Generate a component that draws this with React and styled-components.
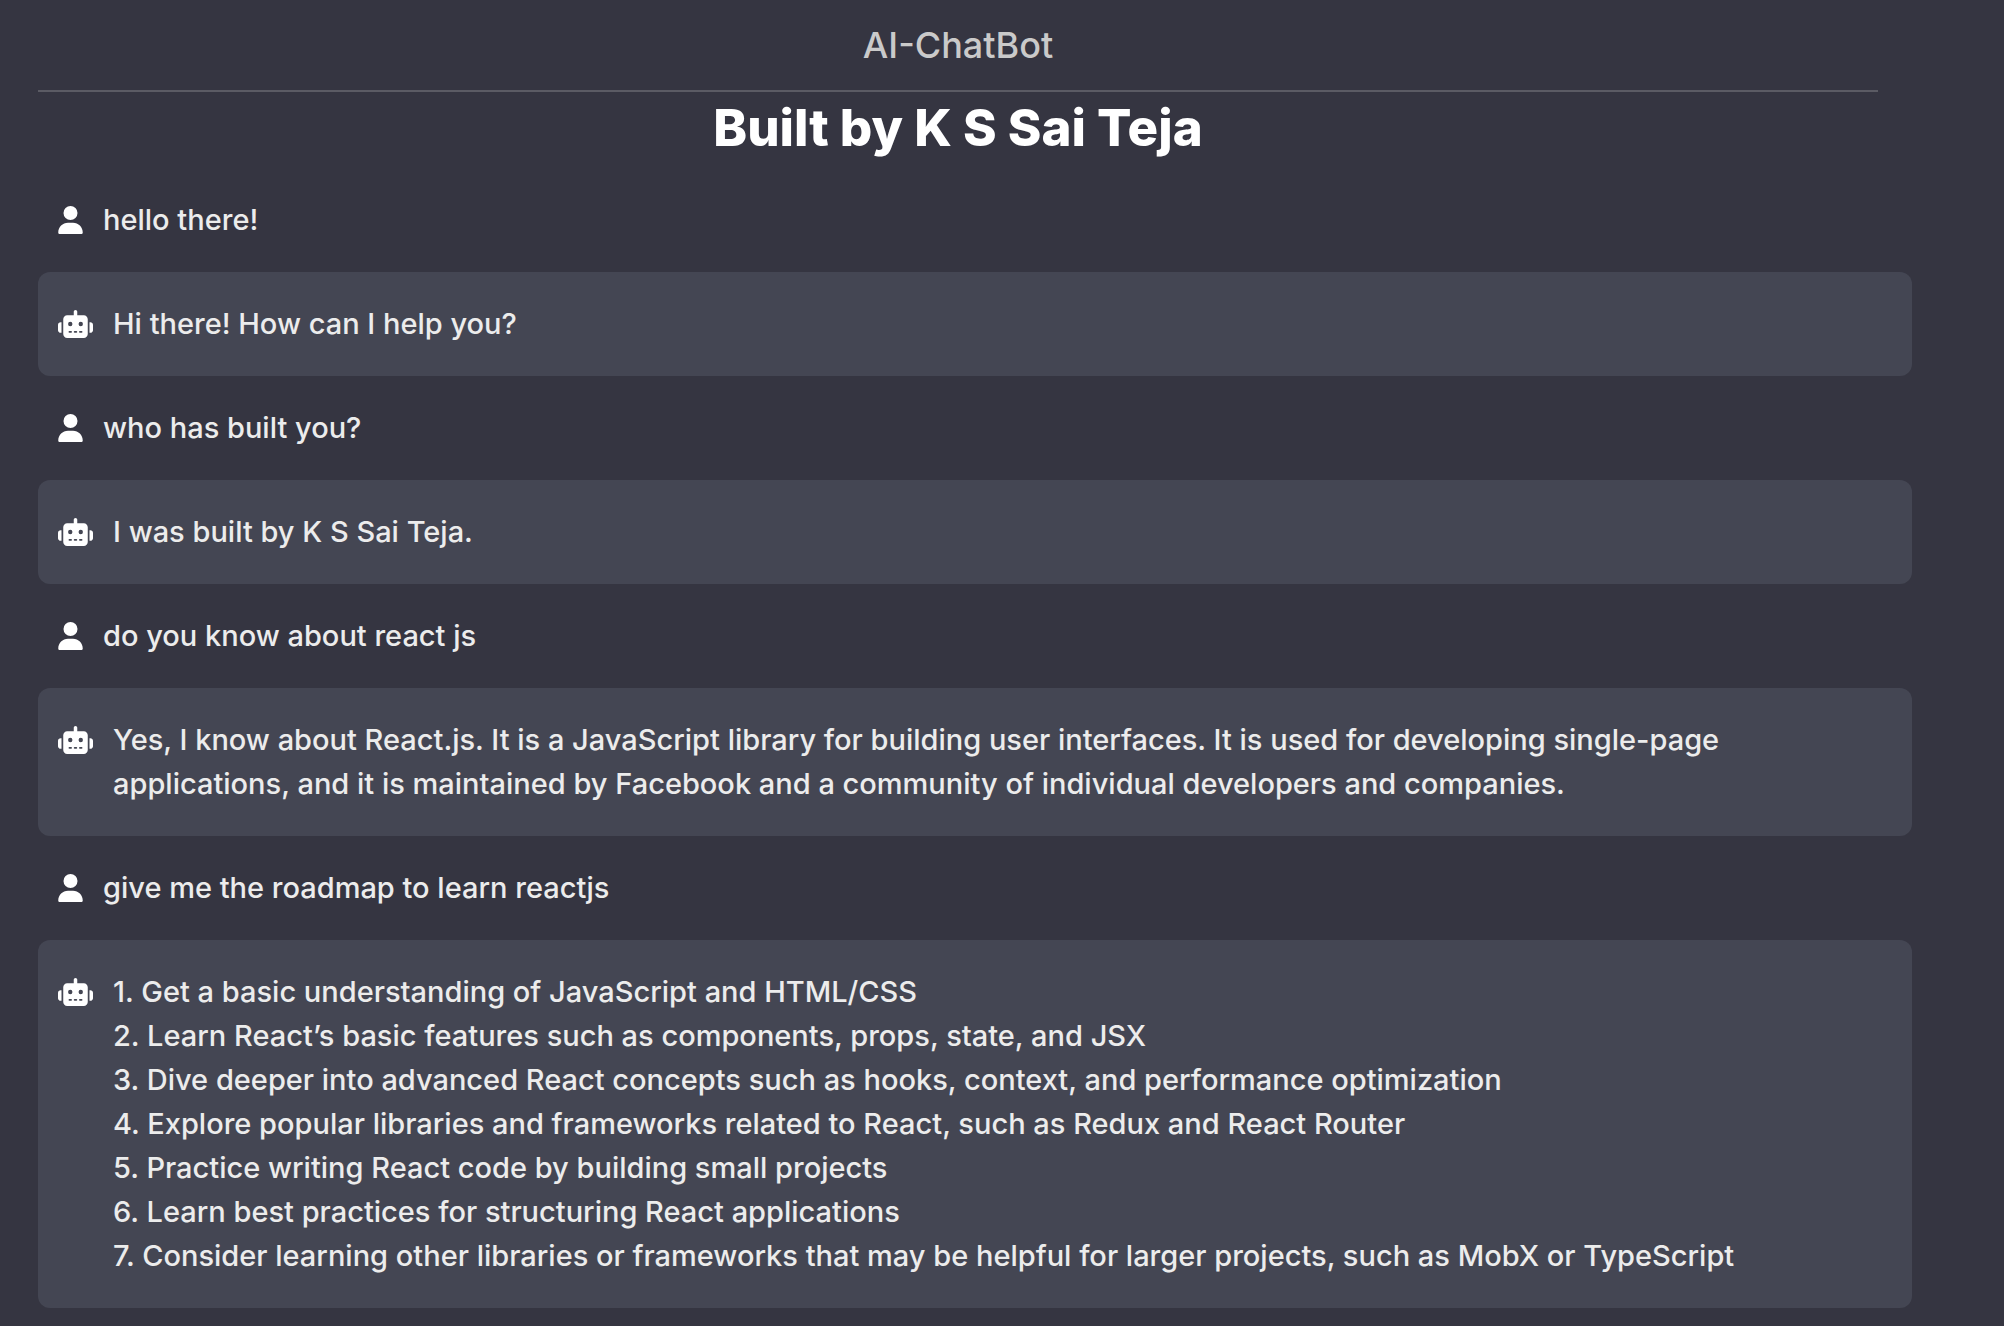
import React from "react";
import styled, { createGlobalStyle } from "styled-components";
import { FaRobot, FaUser } from "react-icons/fa6";

const GlobalStyle = createGlobalStyle`
  * {
    box-sizing: border-box;
  }

  body {
    margin: 0;
    background: #353541;
    color: #ececec;
    font-family: Inter, "Open Sans", sans-serif;
  }

  h1, h2, p, ul {
    margin: 0;
  }
`;

const Page = styled.main`
  min-height: 100vh;
  padding: 0 92px 18px 38px;
`;

const Header = styled.header`
  margin-right: 34px;
  text-align: center;
`;

const AppName = styled.h1`
  padding: 20px 0;
  border-bottom: 2px solid #5b5b64;
  color: #cacaca;
  font-size: 36px;
  font-weight: 500;
  line-height: 50px;
`;

const Byline = styled.h2`
  padding-bottom: 4px;
  color: #ffffff;
  font-size: 51px;
  font-weight: 800;
  line-height: 72px;
`;

const Messages = styled.ul`
  padding: 0;
  list-style: none;
`;

const Message = styled.li`
  display: flex;
  align-items: flex-start;
  gap: 20px;
  padding: 30px 20px;
  border-radius: 12px;
  background: ${({ $bot }) => ($bot ? "#444653" : "transparent")};
`;

const Avatar = styled.span`
  display: flex;
  flex: none;
  align-items: center;
  height: 44px;
  color: #ffffff;

  svg {
    width: ${({ $bot }) => ($bot ? "35px" : "25px")};
    height: 28px;
  }
`;

const MessageText = styled.p`
  padding-right: 40px;
  font-size: 29px;
  font-weight: 500;
  line-height: 44px;
  white-space: pre-line;
`;

const conversation = [
  { from: "user", text: "hello there!" },
  { from: "bot", text: "Hi there! How can I help you?" },
  { from: "user", text: "who has built you?" },
  { from: "bot", text: "I was built by K S Sai Teja." },
  { from: "user", text: "do you know about react js" },
  {
    from: "bot",
    text: "Yes, I know about React.js. It is a JavaScript library for building user interfaces. It is used for developing single-page applications, and it is maintained by Facebook and a community of individual developers and companies.",
  },
  { from: "user", text: "give me the roadmap to learn reactjs" },
  {
    from: "bot",
    text: [
      "1. Get a basic understanding of JavaScript and HTML/CSS",
      "2. Learn React’s basic features such as components, props, state, and JSX",
      "3. Dive deeper into advanced React concepts such as hooks, context, and performance optimization",
      "4. Explore popular libraries and frameworks related to React, such as Redux and React Router",
      "5. Practice writing React code by building small projects",
      "6. Learn best practices for structuring React applications",
      "7. Consider learning other libraries or frameworks that may be helpful for larger projects, such as MobX or TypeScript",
    ].join("\n"),
  },
];

export default function App() {
  return (
    <>
      <GlobalStyle />
      <Page>
        <Header>
          <AppName>AI-ChatBot</AppName>
          <Byline>Built by K S Sai Teja</Byline>
        </Header>
        <Messages>
          {conversation.map(({ from, text }) => {
            const isBot = from === "bot";
            return (
              <Message key={text} $bot={isBot}>
                <Avatar $bot={isBot}>{isBot ? <FaRobot /> : <FaUser />}</Avatar>
                <MessageText>{text}</MessageText>
              </Message>
            );
          })}
        </Messages>
      </Page>
    </>
  );
}
